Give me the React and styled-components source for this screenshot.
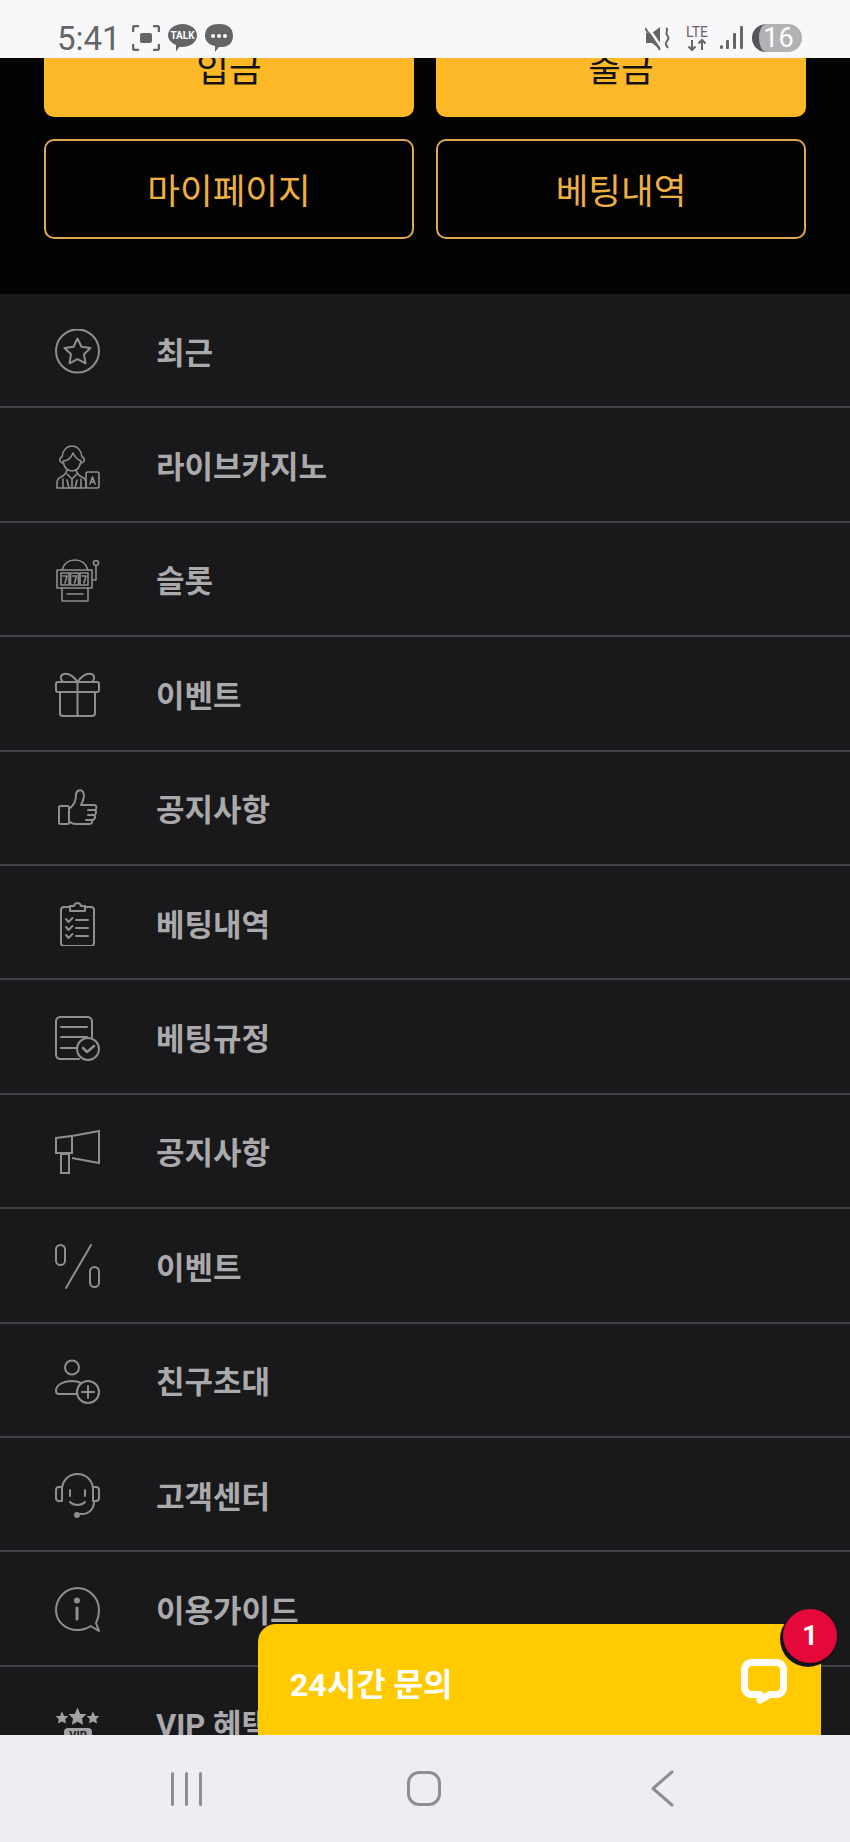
import React from "react";
import styled, { createGlobalStyle } from "styled-components";

const GlobalStyle = createGlobalStyle`
  html, body {
    margin: 0;
    padding: 0;
    background: #000;
  }
  * {
    box-sizing: border-box;
  }
`;

const Phone = styled.div`
  display: flex;
  flex-direction: column;
  width: 850px;
  height: 1842px;
  overflow: hidden;
  font-family: Roboto, "Noto Sans CJK KR", sans-serif;
`;

const StatusBar = styled.div`
  display: flex;
  align-items: center;
  justify-content: space-between;
  flex: 0 0 58px;
  padding: 18px 48px 0 57px;
  background: #f8f8fa;
  color: #656568;
`;

const StatusGroup = styled.div`
  display: flex;
  align-items: center;
  gap: ${props => props.$gap}px;
`;

const Clock = styled.span`
  margin-right: 3px;
  font-size: 33px;
  line-height: 1;
`;

const Battery = styled.div`
  display: flex;
  align-items: center;
  justify-content: center;
  width: 50px;
  height: 28px;
  padding-right: 4px;
  border-radius: 14px;
  border-left: 7px solid #55555a;
  background: #b2b2b4;
  color: #fff;
  font-size: 27px;
  line-height: 1;
`;

const Viewport = styled.div`
  position: relative;
  flex: 1;
  overflow: hidden;
  background: #19181b;
`;

const Scroller = styled.div`
  margin-top: -41px;
`;

const Actions = styled.div`
  display: grid;
  grid-template-columns: 370px 370px;
  grid-auto-rows: 100px;
  gap: 22px;
  padding: 0 44px 55px;
  background: #030303;
`;

const ActionButton = styled.div`
  display: flex;
  align-items: center;
  justify-content: center;
  padding-bottom: 2px;
  border-radius: 10px;
  border: 2px solid ${props => (props.$filled ? "#fdb827" : "#dfa94f")};
  background: ${props => (props.$filled ? "#fdb827" : "transparent")};
  color: ${props => (props.$filled ? "#111" : "#f0b040")};
  font-size: 35.5px;
  font-weight: 400;
`;

const MenuRow = styled.div`
  display: flex;
  align-items: center;
  gap: 56px;
  height: 114.4px;
  padding-left: 55px;
  border-bottom: 2px solid #414044;
  color: #aaa9ac;
  font-size: 31px;
  font-weight: 700;
  white-space: nowrap;
`;

const Glyph = styled.svg`
  display: block;
  flex: none;
  width: 45px;
  height: 45px;
  margin-top: 3px;
  fill: none;
  stroke: #8f8e91;
  stroke-width: 2;
  stroke-linecap: round;
  stroke-linejoin: round;
`;

const ChatWidget = styled.div`
  position: absolute;
  left: 258px;
  bottom: 0;
  display: flex;
  align-items: center;
  justify-content: space-between;
  width: 563px;
  height: 111px;
  padding: 5px 34px 0 32px;
  border-radius: 18px 18px 0 0;
  background: #ffcb00;
  color: #fff;
  font-size: 32px;
  font-weight: 700;
`;

const Badge = styled.div`
  position: absolute;
  top: -15px;
  right: -16px;
  display: flex;
  align-items: center;
  justify-content: center;
  width: 54px;
  height: 54px;
  border-radius: 50%;
  background: #e4093a;
  box-shadow: -2px 3px 0 1px #131214;
  color: #fff;
  font-size: 27px;
  font-weight: 700;
`;

const NavBar = styled.div`
  display: grid;
  grid-template-columns: repeat(3, 238px);
  flex: 0 0 107px;
  padding: 0 67px;
  background: #eeeef2;
`;

const NavItem = styled.div`
  display: flex;
  align-items: center;
  justify-content: center;
  gap: 11px;
`;

const NavBarLine = styled.span`
  width: 3px;
  height: 34px;
  border-radius: 2px;
  background: #8e8e92;
`;

const NavHome = styled.span`
  width: 34px;
  height: 35px;
  border: 3px solid #8e8e92;
  border-radius: 12px;
`;

const StarIcon = () => (
  <Glyph viewBox="0 0 45 45">
    <circle cx="22.5" cy="22" r="21.5" />
    <path d="M22.5 9.5l4 8.2 9 1.3-6.5 6.3 1.5 9-8-4.2-8 4.2 1.5-9-6.500-6.300 9-1.300z" />
  </Glyph>
);

const DealerIcon = () => (
  <Glyph viewBox="0 0 45 45" style={{ strokeWidth: 1.6 }}>
    <path d="M7 19c-3-1-3-5 0-6C8 6 12 2 17 2s9 4 10 11c3 1 3 5 0 6" />
    <path d="M8 17c4 0 8-3 10-8 2 4 5 7 8 8-1 6-4 10-9 10s-8-4-9-10z" />
    <path d="M12 26c-1 3-3 6-6 7-3 1-4 3-4 6v5h29v-5c0-3-1-5-4-6-3-1-5-4-6-7" />
    <path d="M12 30l5 5 5-5M17 35v9M8 35v9M26 35v9M12 36l2 8M22 36l-2 8" />
    <rect x="31" y="28" width="13" height="16" rx="2" />
    <path d="M35 40l2.500-7 2.500 7M36 38h3" />
  </Glyph>
);

const SlotIcon = () => (
  <Glyph viewBox="0 0 45 45" style={{ strokeWidth: 1.6 }}>
    <path d="M7 12C9 5 14 2 20 2s11 3 13 10" />
    <rect x="2" y="12" width="35" height="18" />
    <rect x="6" y="15" width="8" height="12" />
    <rect x="15.500" y="15" width="8" height="12" />
    <rect x="25" y="15" width="8" height="12" />
    <path d="M8 18h4l-2 7M17.500 18h4l-2 7M27 18h4l-2 7" />
    <path d="M7 30v13h26V30M12 36h16M37 22h4V8" />
    <circle cx="41" cy="5" r="2.500" />
  </Glyph>
);

const GiftIcon = () => (
  <Glyph viewBox="0 0 45 45">
    <rect x="1" y="10" width="43" height="10" rx="2" />
    <path d="M5 20v21c0 2 1 3 3 3h29c2 0 3-1 3-3V20M22.500 10v34" />
    <path d="M22.500 10C19 5 14 1 9 2 5 3 5 7 8 10M22.500 10C26 5 31 1 36 2c4 1 4 5 1 8" />
  </Glyph>
);

const ThumbIcon = () => (
  <Glyph viewBox="0 0 45 45">
    <rect x="4" y="19" width="10" height="18" rx="1.500" />
    <path d="M15 21c4-3 6-7 6-13 0-5 5-6 7-3 2 3 0 9-2 13h13c3 0 3 4 1 5 2 1 1 5-1 5 2 1 1 5-2 5 1 3-1 4-3 4H21c-3 0-5-1-6-2" />
    <path d="M33 23h7M33 28h6M31 33h6" />
  </Glyph>
);

const ClipboardIcon = () => (
  <Glyph viewBox="0 0 45 45">
    <path d="M15 6H9C7 6 6 7 6 9v33c0 2 1 3 3 3h27c2 0 3-1 3-3V9c0-2-1-3-3-3h-6" />
    <path d="M15 10V5h4c1-4 6-4 7 0h4v5z" />
    <path d="M11 18l2.500 3 4-4M11 26l2.500 3 4-4M11 34l2.500 3 4-4M21 19h12M21 27h12M21 35h12" />
  </Glyph>
);

const RuleIcon = () => (
  <Glyph viewBox="0 0 45 45">
    <path d="M37 21V5c0-2-2-4-4-4H5C3 1 1 3 1 5v34c0 2 2 4 4 4h19" />
    <path d="M6 11h26M6 21h26M6 32h16" />
    <circle cx="33" cy="33" r="11" />
    <path d="M28 32l4 4 7-6" strokeWidth="2.500" />
  </Glyph>
);

const MegaphoneIcon = () => (
  <Glyph viewBox="0 0 45 45">
    <path d="M1 8l16-2v17H1zM17 6l27-5v32l-27-5M6 24h8v19H6z" strokeLinecap="butt" strokeLinejoin="miter" />
  </Glyph>
);

const PercentIcon = () => (
  <Glyph viewBox="0 0 45 45">
    <rect x="1" y="1" width="9" height="20" rx="4.500" />
    <rect x="35" y="23" width="9" height="20" rx="4.500" />
    <path d="M11 44L36 1" />
  </Glyph>
);

const FriendIcon = () => (
  <Glyph viewBox="0 0 45 45">
    <circle cx="17" cy="8.500" r="7" />
    <path d="M26 24c-2-1-5-2-9-2C8 22 1 26 1 32c0 2 1 3 3 3h17" />
    <circle cx="33" cy="33" r="11" />
    <path d="M33 27v12M27 33h12" />
  </Glyph>
);

const HeadsetIcon = () => (
  <Glyph viewBox="0 0 45 45">
    <path d="M7 15C8 7 14 1 22.500 1S37 7 38 15" />
    <path d="M7 14H4c-2 0-3 1-3 3v8c0 2 1 3 3 3h3zM38 14h3c2 0 3 1 3 3v8c0 2-1 3-3 3h-3z" />
    <path d="M15 17v6M30 17v6M15 29c4 4 11 4 15 0M39 29c0 7-5 12-12 12H24" />
    <circle cx="22" cy="42" r="2" fill="#8f8e91" />
  </Glyph>
);

const InfoIcon = () => (
  <Glyph viewBox="0 0 45 45">
    <path d="M44 44l-3-8c2-4 3-8 3-13C44 11 34 1 22.500 1S1 11 1 23s10 20 21.500 20c5 0 9-1 13-4z" />
    <circle cx="22" cy="13.500" r="2" fill="#8f8e91" />
    <path d="M22 21v11" strokeWidth="3" />
  </Glyph>
);

const starPath = "M0-10L2.900-3.100 9.500-3.100 4.700 1.500 5.900 8.100 0 5-5.900 8.100-4.700 1.500-9.500-3.100-2.900-3.100z";

const VipIcon = () => (
  <Glyph viewBox="0 0 45 45" style={{ fill: "#a2a1a4", stroke: "none" }}>
    <path d={starPath} transform="translate(22.500 15) scale(.95)" />
    <path d={starPath} transform="translate(7 16) scale(.68)" />
    <path d={starPath} transform="translate(38 16) scale(.68)" />
    <rect x="9" y="26" width="28" height="14" rx="4" />
    <text x="23" y="37" textAnchor="middle" fontSize="11" fontWeight="700" fontFamily="Roboto" fill="#19181b">VIP</text>
  </Glyph>
);

const menuItems = [
  { label: "최근", Icon: StarIcon },
  { label: "라이브카지노", Icon: DealerIcon },
  { label: "슬롯", Icon: SlotIcon },
  { label: "이벤트", Icon: GiftIcon },
  { label: "공지사항", Icon: ThumbIcon },
  { label: "베팅내역", Icon: ClipboardIcon },
  { label: "베팅규정", Icon: RuleIcon },
  { label: "공지사항", Icon: MegaphoneIcon },
  { label: "이벤트", Icon: PercentIcon },
  { label: "친구초대", Icon: FriendIcon },
  { label: "고객센터", Icon: HeadsetIcon },
  { label: "이용가이드", Icon: InfoIcon },
  { label: "VIP 혜택", Icon: VipIcon }
];

const actionItems = [
  { label: "입금", filled: true },
  { label: "출금", filled: true },
  { label: "마이페이지" },
  { label: "베팅내역" }
];

const App = () => (
  <Phone>
    <GlobalStyle />
    <StatusBar>
      <StatusGroup $gap={8}>
        <Clock>5:41</Clock>
        <svg width="28" height="26" viewBox="0 0 28 26" fill="none" stroke="#656568" strokeWidth="2.500">
          <path d="M1 7V3c0-1 1-2 2-2h4M21 1h4c1 0 2 1 2 2v4M27 19v4c0 1-1 2-2 2h-4M7 25H3c-1 0-2-1-2-2v-4" />
          <rect x="8" y="8" width="12" height="10" rx="2" fill="#656568" stroke="none" />
        </svg>
        <svg width="29" height="28" viewBox="0 0 29 28">
          <path d="M14.500 0C22.500 0 29 5 29 11.500S22.500 23 14.500 23c-1 0-2 0-3-.2L8 27.500V21C3.500 19 0 15.500 0 11.500 0 5 6.500 0 14.500 0z" fill="#656568" />
          <text x="14.500" y="15" textAnchor="middle" fontSize="10" fontWeight="700" fontFamily="Roboto" fill="#fff">TALK</text>
        </svg>
        <svg width="28" height="28" viewBox="0 0 28 28" fill="#656568">
          <path d="M14 0c8 0 14 3 14 12 0 7-5 11-11 11h-3l-4 5v-6C4 21 0 17 0 12 0 3 6 0 14 0z" />
          <circle cx="8" cy="12" r="2" fill="#fff" />
          <circle cx="14" cy="12" r="2" fill="#fff" />
          <circle cx="20" cy="12" r="2" fill="#fff" />
        </svg>
      </StatusGroup>
      <StatusGroup $gap={9}>
        <svg width="26" height="26" viewBox="0 0 26 26" fill="#656568">
          <path d="M1 8h6l8-6v22l-8-6H1z" />
          <path d="M2 1l15 22" stroke="#f8f8fa" strokeWidth="2.500" />
          <path d="M0 3l15 22" stroke="#656568" strokeWidth="2" />
          <path d="M21 3c3 2-1 4 1 7s2 3 0 6-1 4 1 7" fill="none" stroke="#656568" strokeWidth="2" />
        </svg>
        <svg width="28" height="27" viewBox="0 0 28 27" style={{ marginLeft: 3 }}>
          <text x="14" y="12" textAnchor="middle" fontSize="14" fontFamily="Roboto" fill="#656568">LTE</text>
          <path d="M9 15v10M5.500 21.500L9 25l3.500-3.500M19 25V15M15.500 18.500L19 15l3.500 3.500" fill="none" stroke="#656568" strokeWidth="2" />
        </svg>
        <svg width="23" height="24" viewBox="0 0 23 24" fill="#656568">
          <rect x="0" y="19" width="3" height="4" rx="1.500" />
          <rect x="6" y="14" width="3" height="9" rx="1" />
          <rect x="13" y="7" width="3" height="16" rx="1" />
          <rect x="20" y="0" width="3" height="23" rx="1" />
        </svg>
        <Battery>16</Battery>
      </StatusGroup>
    </StatusBar>
    <Viewport>
      <Scroller>
        <Actions>
          {actionItems.map(item => (
            <ActionButton key={item.label} $filled={item.filled}>
              {item.label}
            </ActionButton>
          ))}
        </Actions>
        {menuItems.map((item, i) => (
          <MenuRow key={i}>
            <item.Icon />
            {item.label}
          </MenuRow>
        ))}
      </Scroller>
      <ChatWidget>
        24시간 문의
        <svg width="46" height="46" viewBox="0 0 46 46" fill="none" stroke="#fff" strokeWidth="7" strokeLinejoin="round">
          <path d="M11 3.500h24c4.500 0 7.500 3 7.500 7.500v17c0 4.500-3 7.500-7.500 7.500h-6L19 41v-5.500h-8c-4.500 0-7.500-3-7.500-7.500V11c0-4.500 3-7.500 7.500-7.500z" />
        </svg>
        <Badge>1</Badge>
      </ChatWidget>
    </Viewport>
    <NavBar>
      <NavItem>
        <NavBarLine />
        <NavBarLine />
        <NavBarLine />
      </NavItem>
      <NavItem>
        <NavHome />
      </NavItem>
      <NavItem>
        <svg width="24" height="37" viewBox="0 0 24 37" fill="none" stroke="#8e8e92" strokeWidth="3" strokeLinecap="round" strokeLinejoin="round">
          <path d="M22 2L3 18.500 22 35" />
        </svg>
      </NavItem>
    </NavBar>
  </Phone>
);

export default App;
